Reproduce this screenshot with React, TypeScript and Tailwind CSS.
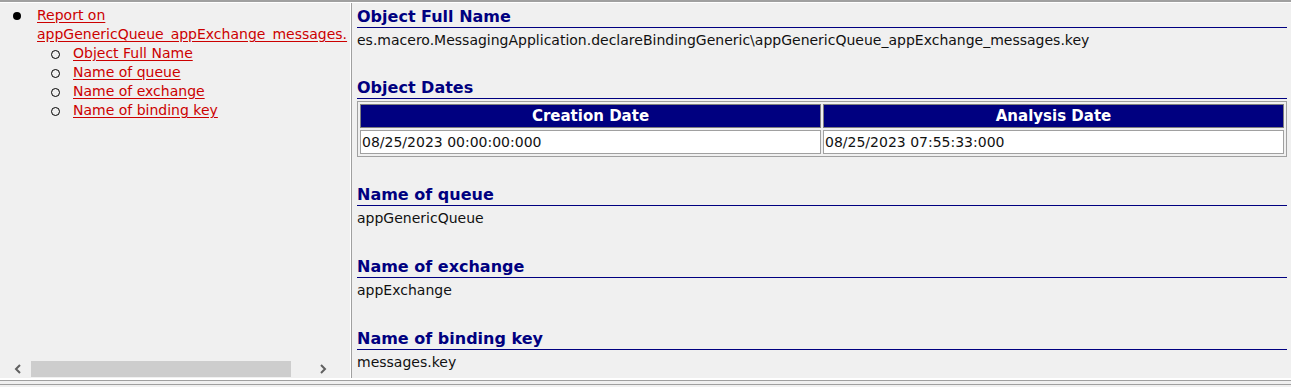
import React from 'react';

const sections = [
  { title: 'Name of queue', value: 'appGenericQueue' },
  { title: 'Name of exchange', value: 'appExchange' },
  { title: 'Name of binding key', value: 'messages.key' },
];

const Heading = ({ children }: { children: React.ReactNode }) => (
  <h2 className="border-b border-[#000080] text-[16px] leading-[19px] font-bold text-[#000080] pb-[1px]">
    {children}
  </h2>
);

const TocLink = ({ children }: { children: React.ReactNode }) => (
  <a href="#" className="text-[#cc0000] underline underline-offset-2">
    {children}
  </a>
);

const App: React.FC = () => {
  return (
    <div className="w-[1291px] h-[387px] bg-[#f0f0f0] font-['DejaVu_Sans',sans-serif] text-[14px] text-[#111] flex flex-col overflow-hidden">
      <div className="h-[3px] border-t-2 border-[#a0a0a0] bg-white" />
      <div className="flex flex-1 min-h-0">
        {/* table of contents */}
        <div className="w-[350px] flex flex-col">
          <ul className="flex-1 pl-[13px] pt-[3px] leading-[19px]">
            <li className="flex">
              <span className="w-[24px] shrink-0 pt-[6px]">
                <span className="block w-[8px] h-[8px] rounded-full bg-black" />
              </span>
              <div>
                <TocLink>Report on appGenericQueue_appExchange_messages.</TocLink>
                <ul>
                  {['Object Full Name', 'Name of queue', 'Name of exchange', 'Name of binding key'].map((t) => (
                    <li key={t} className="flex">
                      <span className="w-[36px] shrink-0 pl-[14px] pt-[6px]">
                        <span className="block w-[9px] h-[9px] rounded-full border-[1.5px] border-black" />
                      </span>
                      <TocLink>{t}</TocLink>
                    </li>
                  ))}
                </ul>
              </div>
            </li>
          </ul>
          <div className="h-[17px] mb-[1px] flex items-center px-[12px] gap-[4px]">
            <svg width="12" height="12" viewBox="0 0 12 12">
              <path d="M8 2 L4 6 L8 10" fill="none" stroke="#606060" strokeWidth="2" />
            </svg>
            <div className="h-[16px] w-[260px] ml-[3px] bg-[#cdcdcd]" />
            <div className="flex-1" />
            <svg width="12" height="12" viewBox="0 0 12 12" className="mr-[9px]">
              <path d="M4 2 L8 6 L4 10" fill="none" stroke="#606060" strokeWidth="2" />
            </svg>
          </div>
        </div>
        <div className="w-[2px] border-l border-white bg-[#a0a0a0]" />
        {/* report body */}
        <div className="flex-1 pl-[5px] pr-[4px] pt-[4px]">
          <Heading>Object Full Name</Heading>
          <p className="leading-[19px] pt-[3px]">
            es.macero.MessagingApplication.declareBindingGeneric\appGenericQueue_appExchange_messages.key
          </p>
          <div className="mt-[28px]">
            <Heading>Object Dates</Heading>
            <table className="w-full mt-[2px] border border-[#a0a0a0] border-separate border-spacing-[2px]">
              <thead>
                <tr>
                  <th className="bg-[#000080] text-white font-bold text-[15px] leading-[22px] border border-[#808080]">Creation Date</th>
                  <th className="bg-[#000080] text-white font-bold text-[15px] leading-[22px] border border-[#808080]">Analysis Date</th>
                </tr>
              </thead>
              <tbody>
                <tr>
                  <td className="bg-white border border-[#a0a0a0] px-[1px] leading-[22px] w-1/2">08/25/2023 00:00:00:000</td>
                  <td className="bg-white border border-[#a0a0a0] px-[1px] leading-[22px] w-1/2">08/25/2023 07:55:33:000</td>
                </tr>
              </tbody>
            </table>
          </div>
          {sections.map((s, i) => (
            <div key={s.title} className={i === 0 ? 'mt-[28px]' : 'mt-[29px]'}>
              <Heading>{s.title}</Heading>
              <p className="leading-[19px] pt-[3px]">{s.value}</p>
            </div>
          ))}
        </div>
      </div>
      <div className="h-[9px] border-t-2 border-white">
        <div className="h-[5px] border-y border-[#a0a0a0]" />
      </div>
    </div>
  );
};

export default App;
